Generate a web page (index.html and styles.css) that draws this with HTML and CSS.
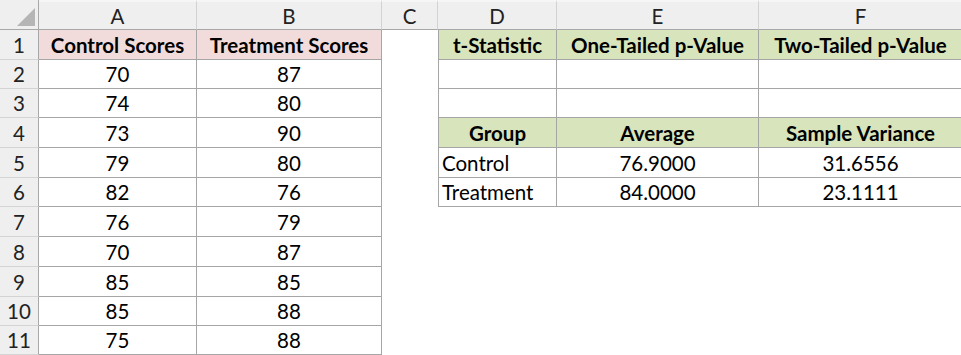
FILE: index.html
```html
<!DOCTYPE html>
<html>
<head>
<meta charset="utf-8">
<link rel="stylesheet" href="styles.css">
</head>
<body>
<div class="sheet">
  <div class="corner"><svg width="39" height="30" viewBox="0 0 39 30"><polygon points="35,8 35,26 17,26" fill="#b5b5b5"/></svg></div>
  <div class="ch">A</div><div class="ch">B</div><div class="ch">C</div><div class="ch">D</div><div class="ch">E</div><div class="ch">F</div>

  <div class="rh">1</div>
  <div class="c b pink">Control Scores</div><div class="c b pink">Treatment Scores</div><div class="c"></div>
  <div class="c b green dl">t-Statistic</div><div class="c b green">One-Tailed p-Value</div><div class="c b green">Two-Tailed p-Value</div>

  <div class="rh">2</div>
  <div class="c b">70</div><div class="c b">87</div><div class="c"></div>
  <div class="c b dl"></div><div class="c b"></div><div class="c b"></div>

  <div class="rh">3</div>
  <div class="c b">74</div><div class="c b">80</div><div class="c"></div>
  <div class="c b dl"></div><div class="c b"></div><div class="c b"></div>

  <div class="rh">4</div>
  <div class="c b">73</div><div class="c b">90</div><div class="c"></div>
  <div class="c b green dl">Group</div><div class="c b green">Average</div><div class="c b green">Sample Variance</div>

  <div class="rh">5</div>
  <div class="c b">79</div><div class="c b">80</div><div class="c"></div>
  <div class="c b dl left">Control</div><div class="c b">76.9000</div><div class="c b">31.6556</div>

  <div class="rh">6</div>
  <div class="c b">82</div><div class="c b">76</div><div class="c"></div>
  <div class="c b dl left">Treatment</div><div class="c b">84.0000</div><div class="c b">23.1111</div>

  <div class="rh">7</div>
  <div class="c b">76</div><div class="c b">79</div><div class="c"></div><div class="c"></div><div class="c"></div><div class="c"></div>

  <div class="rh">8</div>
  <div class="c b">70</div><div class="c b">87</div><div class="c"></div><div class="c"></div><div class="c"></div><div class="c"></div>

  <div class="rh">9</div>
  <div class="c b">85</div><div class="c b">85</div><div class="c"></div><div class="c"></div><div class="c"></div><div class="c"></div>

  <div class="rh">10</div>
  <div class="c b">85</div><div class="c b">88</div><div class="c"></div><div class="c"></div><div class="c"></div><div class="c"></div>

  <div class="rh">11</div>
  <div class="c b">75</div><div class="c b">88</div><div class="c"></div><div class="c"></div><div class="c"></div><div class="c"></div>
</div>
</body>
</html>
```
FILE: styles.css
```css
html, body {
  margin: 0;
  padding: 0;
  background: #ffffff;
  overflow: hidden;
}
.sheet {
  display: grid;
  grid-template-columns: 39px 158px 185px 56px 119px 202px 204px;
  grid-template-rows: 30px 30px 29px 29px 30px 30px 29px 30px 30px 30px 29px 29px;
  font-family: Lato, "Open Sans", sans-serif;
  font-size: 20.5px;
  color: #000;
  width: 963px;
}
.corner {
  background: #efefef;
  border-right: 1px solid #a8a8a8;
  border-bottom: 1px solid #a8a8a8;
  box-sizing: border-box;
  line-height: 0;
}
.ch {
  background: #efefef;
  border-right: 1px solid #d2d2d2;
  border-bottom: 1px solid #a8a8a8;
  border-top: 2px solid #f6f6f6;
  box-sizing: border-box;
  display: flex;
  align-items: center;
  justify-content: center;
  color: #222;
}
.rh {
  background: #efefef;
  border-right: 1px solid #a8a8a8;
  border-bottom: 1px solid #d4d4d4;
  box-sizing: border-box;
  display: flex;
  align-items: center;
  justify-content: center;
  color: #222;
}
.c {
  box-sizing: border-box;
  display: flex;
  align-items: center;
  justify-content: center;
  white-space: nowrap;
  overflow: hidden;
}
.b {
  border-right: 1px solid #a6a6a6;
  border-bottom: 1px solid #a6a6a6;
}
.dl {
  border-left: 1px solid #a6a6a6;
}
.pink {
  background: #f2dcdb;
  font-weight: 700;
}
.green {
  background: #d8e4bc;
  font-weight: 700;
}
.left {
  justify-content: flex-start;
  padding-left: 3px;
}
```
